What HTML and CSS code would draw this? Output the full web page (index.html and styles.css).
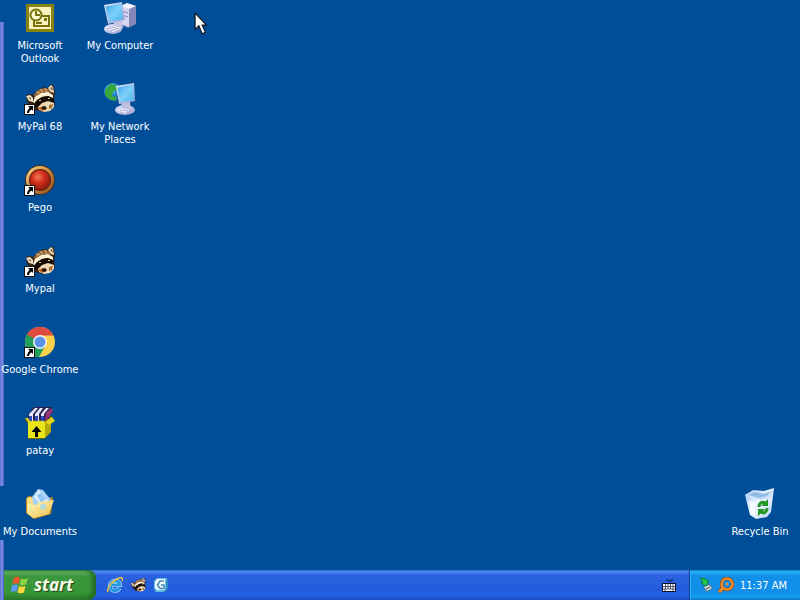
FILE: index.html
```html
<!DOCTYPE html>
<html lang="en">
<head>
<meta charset="utf-8">
<title>Desktop</title>
<link rel="stylesheet" href="styles.css">
</head>
<body>
<svg class="defs" aria-hidden="true">
  <defs>
    <linearGradient id="screen" x1="0" y1="0" x2="1" y2="1"><stop offset="0" stop-color="#3fa8f0"/><stop offset=".5" stop-color="#7fd0f8"/><stop offset="1" stop-color="#48b4f4"/></linearGradient>
    <linearGradient id="shell" x1="0" y1="0" x2="1" y2="1"><stop offset="0" stop-color="#e4ebff"/><stop offset="1" stop-color="#9a9ccb"/></linearGradient>
    <linearGradient id="folder" x1="0" y1="0" x2="1" y2="1"><stop offset="0" stop-color="#fff6bd"/><stop offset="1" stop-color="#eec04c"/></linearGradient>
    <linearGradient id="bin" x1="0" y1="0" x2="1" y2="1"><stop offset="0" stop-color="#8dbdf0"/><stop offset=".45" stop-color="#f1f8ff"/><stop offset="1" stop-color="#b5d2ee"/></linearGradient>
    <radialGradient id="globe" cx=".4" cy=".3" r=".7"><stop offset="0" stop-color="#8fe0f5"/><stop offset=".5" stop-color="#2a8fd8"/><stop offset="1" stop-color="#0c4ca8"/></radialGradient>
    <radialGradient id="gem" cx=".4" cy=".35" r=".65"><stop offset="0" stop-color="#f07a58"/><stop offset=".5" stop-color="#cf2d18"/><stop offset="1" stop-color="#8d1c10"/></radialGradient>
    <linearGradient id="gold" x1="0" y1="0" x2="1" y2="1"><stop offset="0" stop-color="#f4dc92"/><stop offset=".5" stop-color="#c98a3c"/><stop offset="1" stop-color="#8a4b20"/></linearGradient>
    <symbol id="shortcut" viewBox="0 0 11 11">
      <path d="M0 0h11v11H0z" fill="#111"/><path d="M1 1h9v9H1z" fill="#fff"/>
      <path d="M4 2h5v5L7.500 5.500C6 6.500 5 7.500 5 9H3C3 7 4 5.500 5.700 3.800z" fill="#000"/>
    </symbol>
    <symbol id="raccoon" viewBox="0 0 32 32">
      <path d="M2 12l4-1 3 1 5-5 6-3 4 1 3-4 3 2 1 7-1 5 1 7-4 5-8 2-8-2-5-5-3-3z" fill="#3a2415"/>
      <path d="M24 5l3-3 2 2 1 6-3-1z" fill="#efe3c6"/><path d="M26 5l2-1 1 4z" fill="#77512d"/>
      <path d="M2 13l4-1 3 3 0 4-4-1z" fill="#f1e6c9"/><path d="M4 14l3 1v2z" fill="#65452b"/>
      <path d="M10 12l4-5 6-2 5 1 2 4-6-1-6 2-4 5z" fill="#9b6b3a"/>
      <path d="M12 9l4 1M16 6l3 3M21 5l2 4" stroke="#e0bd83" stroke-width="1"/>
      <path d="M9 19l2-5 6-4 7-1 5 3 0 3-5-2-6 1-5 3-2 4z" fill="#fff2d5"/>
      <path d="M9 22l3-4 6-4 6-1 6 3 0 4-5-2-5 1-5 4-4 2z" fill="#160d08"/>
      <path d="M14 24l4-4 6-2 6 2 0 4-4 4-6 1-5-2z" fill="#f0d8b2"/>
      <path d="M14 25l5-2 3 3-4 2z" fill="#b4652b"/><path d="M18 24l3-1 2 2-2 2-3-1z" fill="#251309"/>
      <path d="M25 22l4-1-1 4-3 1z" fill="#a4703c"/>
      <path d="M15 17h2v1h-2zM24 15h2v1h-2z" fill="#e7c66b"/>
    </symbol>
  </defs>
</svg>
<main class="desktop">
  <ul class="column">
    <li><button class="shortcut">
      <svg class="icon" viewBox="0 0 32 32"><path d="M2 2h28v28H2z" fill="#89840b"/><path d="M5 5h22v22H5z" fill="#f7f3bf"/><path d="M10 14h15v10H10z" fill="#f7f3bf" stroke="#77730a" stroke-width="2"/><circle cx="12" cy="13" r="5.500" fill="#fffbd5" stroke="#77730a" stroke-width="2"/><path d="M12 9v4h4M12 21h6" fill="none" stroke="#77730a" stroke-width="2"/><path d="M20 16h3v3h-3z" fill="#77730a"/></svg>
      <span>Microsoft Outlook</span></button></li>
    <li><button class="shortcut">
      <svg class="icon" viewBox="0 0 32 32"><use href="#raccoon"/><use href="#shortcut" y="21" width="11" height="11"/></svg>
      <span>MyPal 68</span></button></li>
    <li><button class="shortcut">
      <svg class="icon" viewBox="0 0 32 32"><circle cx="16" cy="16" r="15" fill="#4f2b17"/><circle cx="16" cy="16" r="14" fill="url(#gold)"/><circle cx="16" cy="16" r="11" fill="#69200f"/><circle cx="16" cy="16" r="10" fill="url(#gem)"/><use href="#shortcut" y="21" width="11" height="11"/></svg>
      <span>Pego</span></button></li>
    <li><button class="shortcut">
      <svg class="icon" viewBox="0 0 32 32"><use href="#raccoon"/><use href="#shortcut" y="21" width="11" height="11"/></svg>
      <span>Mypal</span></button></li>
    <li><button class="shortcut">
      <svg class="icon" viewBox="0 0 32 32"><circle cx="16" cy="16" r="15" fill="#fbd04c"/><path d="M3 8.500A15 15 0 0 0 15 31l6.500-11.500L16 16z" fill="#22a05a"/><path d="M3 8.500L10 19 16 16 16 9.500h13.500A15 15 0 0 0 3 8.500z" fill="#dd4b40"/><path d="M3 8.500L10 20l6-4z" fill="#22a05a"/><circle cx="16" cy="16" r="7" fill="#f4f7f8"/><circle cx="16" cy="16" r="5.500" fill="#5b93ec"/><use href="#shortcut" y="21" width="11" height="11"/></svg>
      <span>Google Chrome</span></button></li>
    <li><button class="shortcut">
      <svg class="icon" viewBox="0 0 32 32"><path d="M1 12l6-3h20l4 5-6 4v9l-5 5H4V17z" fill="#6f6500"/><path d="M4 8l6-8h18l-3 13H4z" fill="#27204e"/><path d="M5 7l6-6h3L9 7v8H5zM11 7l5-6h3l-4 6v8h-4zM17 7l5-6h3l-5 6v8h-3z" fill="#e7e5fa"/><path d="M5 9h3v5H5zM11 9h3v5h-3zM17 9h3v5h-3z" fill="#2d4dbb"/><path d="M22 6l5-5 2 3-6 9h-2z" fill="#983378"/><path d="M4 15h17v16H4z" fill="#ebe51b"/><path d="M21 15l6-5v15l-6 6z" fill="#b7a70a"/><path d="M1 11l3 4h17l-4-1H6l-2-3zM21 15l7-5 3 4-6 4z" fill="#ded319"/><path d="M12.500 19l5 6h-3.500v5h-3v-5H7.500z" fill="#000"/></svg>
      <span>patay</span></button></li>
    <li><button class="shortcut">
      <svg class="icon" viewBox="0 0 32 32"><path d="M2 10l3-2 5 1 2 3 17-3-2 17-17 5-8-6z" fill="#bd8921"/><path d="M3 10l3-1 4 1 2 3 14-2v12L9 30l-6-5z" fill="#f9df82"/><path d="M8 9l6-8 5 1 8 10-7 9-10-2z" fill="#a4d0f5"/><path d="M10 9l5-7 9 11-5 6z" fill="#deefff"/><path d="M13 7l4-2 5 6-5 4z" fill="#8fc3f0"/><path d="M4 16l8 1 3-3 15-2-5 14-15 4-6-4z" fill="url(#folder)"/><path d="M16 17l4-2 3 3-3 4-4-1z" fill="#b4dadd"/></svg>
      <span>My Documents</span></button></li>
  </ul>
  <ul class="column">
    <li><button class="shortcut">
      <svg class="icon" viewBox="0 0 32 32"><path d="M17 4l6-3 9 3v18l-8 4-7-3z" fill="#8589ba"/><path d="M17 4l8 3v18l-8-3z" fill="#d7d8f0"/><path d="M17 4l6-3 9 3-7 3z" fill="#f4f5ff"/><path d="M18 9l6 2M18 13l6 2M26 10l5-2M26 14l5-2M26 18l5-2" stroke="#7e83b5"/><ellipse cx="9" cy="27" rx="9" ry="5" fill="url(#shell)"/><path d="M9 20l9-2 1 8-7 3z" fill="#c3c5e3"/><path d="M0 3l18-3 3 18-17 4z" fill="url(#shell)"/><path d="M1.500 4.500l16-3 1.500 15.500L5 20z" fill="url(#screen)"/><path d="M1 26l10-2 6 2-8 4z" fill="#f1f2ff"/><path d="M3 27l9-2M6 29l9-3" stroke="#a5a6c7"/></svg>
      <span>My Computer</span></button></li>
    <li><button class="shortcut">
      <svg class="icon" viewBox="0 0 32 32"><circle cx="9" cy="9" r="9" fill="url(#globe)"/><path d="M1 7l5-6 6 1 1 5-4 2-1 4 5 1-1 4-6-1-5-5z" fill="#36a83e"/><ellipse cx="21" cy="27" rx="10" ry="5" fill="url(#shell)"/><path d="M17 19h9l1 8-8 2z" fill="#bfc0df"/><path d="M12 3l18-3 1 18-16 3z" fill="url(#shell)"/><path d="M13.500 4.500l15.500-3 1 15.500-14 2.500z" fill="url(#screen)"/><path d="M13 27l8-2 7 1-7 4z" fill="#f3f4ff"/><path d="M16 27l8 1M20 25l7 2" stroke="#aaaace"/></svg>
      <span>My Network Places</span></button></li>
  </ul>
  <ul class="column column-end">
    <li><button class="shortcut">
      <svg class="icon" viewBox="0 0 32 32"><path d="M1 7l8-5 11 1 10-3-3 24-4 5-11 2-6-4z" fill="url(#bin)"/><path d="M1 7l8-4 11 2 10-4-3 8-10 3-9-2z" fill="#c9e1fa"/><path d="M4 7l6-3 10 2 6-2-3 4-7 2z" fill="#91bbe5"/><path d="M5 13l4 1 3 14-4-2z" fill="#f9fdff"/><g fill="none" stroke="#239523" stroke-width="3"><path d="M15 19c0-4 3-6 6-4"/><path d="M23 20c0 4-3 6-6 4"/></g><path d="M24 11v7h-7zM14 28v-7h7z" fill="#239523"/></svg>
      <span>Recycle Bin</span></button></li>
  </ul>
  <svg class="pointer" viewBox="0 0 12 21" aria-hidden="true"><path d="M1 1v15l3.500-3.500L7.500 20l3-1.500-3-6.500H11.500z" fill="#fff" stroke="#111" stroke-width="1"/></svg>
</main>
<footer class="taskbar">
  <button class="start">
    <svg class="flag" viewBox="0 0 20 20" aria-hidden="true"><path d="M4 3c3-2 5-1 6 0L8.500 9C7 8 5 8 2.500 9z" fill="#ef572b"/><path d="M11 3.500c2 1 4 1 7-.5L16 9.500c-2 1-5 1-6.500 0z" fill="#8bd143"/><path d="M2 10.500C5 9 7 9.500 8 10.500L6.500 17C5 16 3 16 .5 17z" fill="#599cf2"/><path d="M9 11c2 1 4 1 6.500 0L14 17.500c-2 1-5 1-6.500 0z" fill="#fbd33b"/></svg>
    <span>start</span>
  </button>
  <nav class="quick" aria-label="Quick launch">
    <button class="tool" aria-label="Internet Explorer"><svg viewBox="0 0 16 16"><path d="M12.500 11A5 5 0 1 1 13 8H4" fill="none" stroke="#c4ebff" stroke-width="4"/><path d="M12.500 11A5 5 0 1 1 13 8H4" fill="none" stroke="#2795e4" stroke-width="3"/><path d="M1 15C-1 12 6 3 12 1c4-1 4 1 3 3" fill="none" stroke="#f2c33c" stroke-width="1.500"/></svg></button>
    <button class="tool" aria-label="Mypal"><svg viewBox="0 0 32 32"><use href="#raccoon"/></svg></button>
    <button class="tool" aria-label="Show Desktop"><svg viewBox="0 0 16 16"><path d="M4 1h10v10l-3 4H3L1 12V4z" fill="#64bce6"/><path d="M4 2h8v11H4L2 11V5z" fill="#f3fbff"/><path d="M11 4H7L4.500 8 7 11.500h4V8H8M14 3v9l-3 3" fill="none" stroke="#318cb9" stroke-width="1.500"/></svg></button>
  </nav>
  <button class="keyboard" aria-label="Keyboard"><svg viewBox="0 0 16 16"><path d="M5 3h2v1h3V3h2" fill="none" stroke="#101b55"/><path d="M1 6h14v9H1z" fill="#080d29"/><path d="M2 7h12v7H2z" fill="#fff"/><path d="M2 9.500h12M2 12h12M4.500 7v5M7 7v5M9.500 7v5M12 7v5M4 12v2M12 12v2" stroke="#151a38" stroke-width=".7"/></svg></button>
  <div class="tray">
    <svg class="tray-icon" viewBox="0 0 16 16" aria-label="Safely remove hardware" role="img"><path d="M5 10l6-3 4 4-6 4z" fill="#596772"/><path d="M6 10l5-2 3 3-5 3z" fill="#d6e0e4"/><path d="M8 12l4-2" stroke="#334450"/><path d="M2 1l6 1 1 2 2 0-3 5-5-3 2-1z" fill="#25c64d" stroke="#137b38"/></svg>
    <svg class="tray-icon" viewBox="0 0 16 16" aria-label="Search" role="img"><circle cx="9" cy="7" r="5.500" fill="none" stroke="#713c1b" stroke-width="3.500"/><path d="M5 11l-4 4" stroke="#713c1b" stroke-width="4"/><circle cx="9" cy="7" r="5.500" fill="none" stroke="#f28a25" stroke-width="2.500"/><path d="M5 11l-4 4" stroke="#f28a25" stroke-width="3"/><circle cx="9" cy="7" r="1.500" fill="#f28a25"/></svg>
    <time datetime="11:37">11:37 AM</time>
  </div>
</footer>
</body>
</html>
```
FILE: styles.css
```css
* {
  box-sizing: border-box;
}

body {
  margin: 0;
  min-height: 100vh;
  display: flex;
  flex-direction: column;
  background:
    linear-gradient(90deg, #5b72d4, #8291e2 50%, #3d60b8) 0 22px / 4px 464px no-repeat,
    linear-gradient(90deg, #5b72d4, #8291e2 50%, #3d60b8) 0 100% / 4px 60px no-repeat,
    #004e98;
  color: #fff;
  font: 11px/13px "DejaVu Sans Condensed", "Liberation Sans", sans-serif;
}

button {
  padding: 0;
  border: 0;
  background: none;
  color: inherit;
  font: inherit;
}

svg {
  display: block;
}

.defs {
  position: absolute;
  width: 0;
  height: 0;
}

.desktop {
  position: relative;
  flex: 1;
  display: flex;
  padding-bottom: 3px;
}

.column {
  width: 80px;
  margin: 0;
  padding: 0;
  list-style: none;
}

.column-end {
  margin-left: auto;
  align-self: flex-end;
}

.column li {
  height: 81px;
}

.shortcut {
  display: flex;
  flex-direction: column;
  align-items: center;
  gap: 5px;
  width: 100%;
  padding-top: 2px;
}

.icon {
  width: 32px;
  height: 32px;
}

.pointer {
  position: absolute;
  left: 194px;
  top: 12px;
  width: 13px;
  height: 23px;
}

.taskbar {
  display: flex;
  align-items: stretch;
  height: 30px;
  margin-left: 4px;
  background: linear-gradient(#3168d5, #4c8bf0 2px, #2a62df 5px, #245ddb 20px, #2460e2 26px, #1d4bc0);
}

.start {
  display: flex;
  align-items: center;
  gap: 4px;
  width: 92px;
  padding-left: 6px;
  border-radius: 0 8px 8px 0;
  background: linear-gradient(#3b8b3b, #62b562 2px, #3c973c 6px, #379637 22px, #2c7d2c);
  box-shadow: inset -4px 0 4px #246b24;
  color: #f8fae6;
  font: italic bold 17px/20px "Noto Sans", "Open Sans", sans-serif;
  text-shadow: 1px 1px 1px #1d451d;
}

.flag {
  width: 20px;
  height: 20px;
}

.quick {
  display: flex;
  align-items: center;
  gap: 7px;
  padding-left: 11px;
}

.tool,
.tool svg,
.keyboard svg,
.tray-icon {
  width: 16px;
  height: 16px;
}

.keyboard {
  display: flex;
  align-items: center;
  margin-left: auto;
  padding-right: 12px;
}

.tray {
  display: flex;
  align-items: center;
  gap: 4px;
  padding: 0 13px 0 8px;
  border-left: 1px solid #0c3f94;
  background: linear-gradient(#0d7fd4, #29b6f5 2px, #1290e8 5px, #118fe9 22px, #139ef0 27px, #0d76c4);
  box-shadow: inset 1px 0 #24b8fb;
}

.tray time {
  margin-left: 2px;
}
```
